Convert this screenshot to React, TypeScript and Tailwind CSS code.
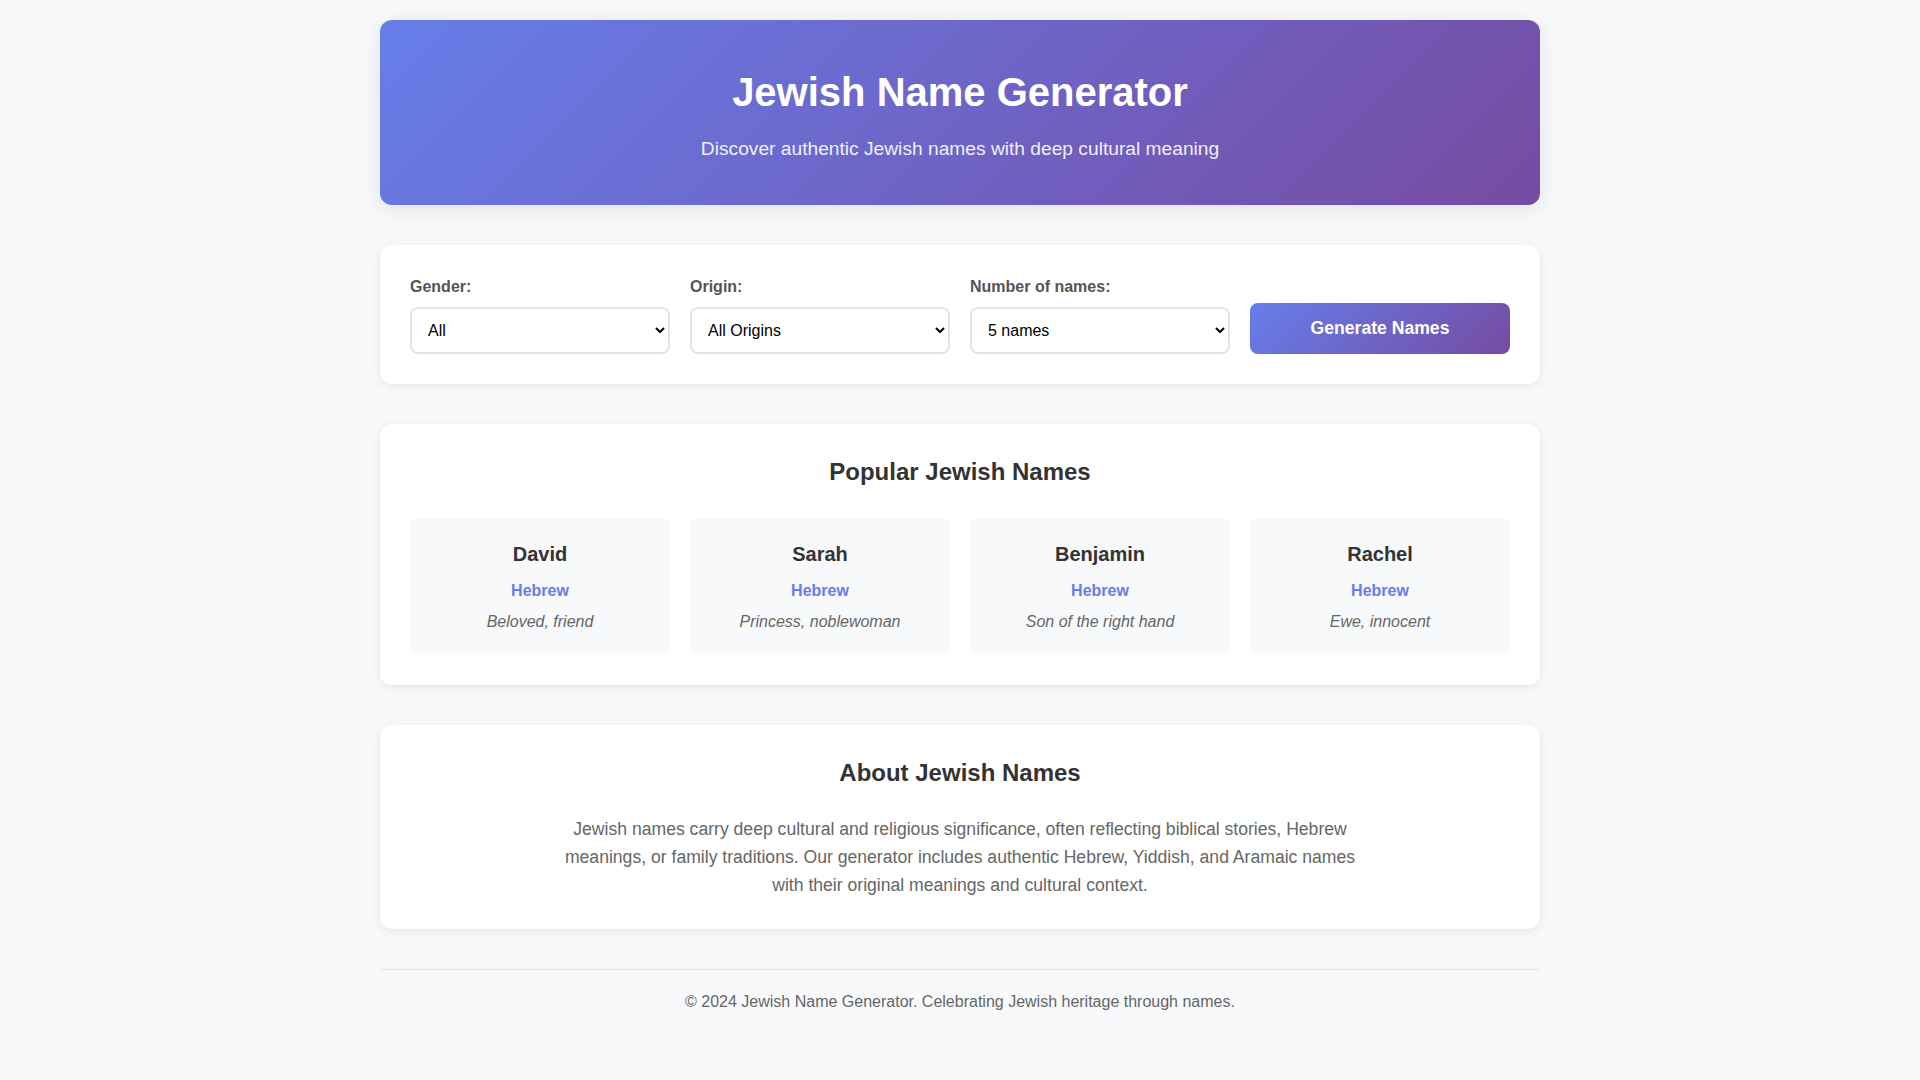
import React from 'react';

const popular = [
  { name: 'David', origin: 'Hebrew', meaning: 'Beloved, friend' },
  { name: 'Sarah', origin: 'Hebrew', meaning: 'Princess, noblewoman' },
  { name: 'Benjamin', origin: 'Hebrew', meaning: 'Son of the right hand' },
  { name: 'Rachel', origin: 'Hebrew', meaning: 'Ewe, innocent' },
];

const selectClass =
  'w-full h-[47px] p-[12px] border-2 border-[#e1e5e9] rounded-[8px] bg-white text-[16px] text-black';

const labelClass = 'block mb-[8px] text-[16px] leading-[24px] font-bold text-[#555]';

const App: React.FC = () => {
  return (
    <div className="min-h-screen bg-[#f8f9fa] font-['Liberation_Sans',Arial,sans-serif] text-[#333]">
      <div className="max-w-[1200px] mx-auto px-[20px] pt-[20px]">
        {/* Header */}
        <header className="mb-[40px] rounded-[12px] bg-[linear-gradient(135deg,#667eea_0%,#764ba2_100%)] pt-[42px] pb-[42px] text-center text-white shadow-[0_4px_20px_rgba(0,0,0,0.1)]">
          <h1 className="text-[40px] leading-[60px] font-bold mb-[12px]">Jewish Name Generator</h1>
          <p className="text-[19.2px] leading-[29px] opacity-90">
            Discover authentic Jewish names with deep cultural meaning
          </p>
        </header>

        {/* Controls */}
        <section className="mb-[40px] rounded-[12px] bg-white p-[30px] shadow-[0_2px_10px_rgba(0,0,0,0.08)]">
          <div className="grid grid-cols-4 gap-[20px] items-end">
            <div>
              <label className={labelClass}>Gender:</label>
              <select className={selectClass} defaultValue="all">
                <option value="all">All</option>
                <option value="male">Male</option>
                <option value="female">Female</option>
              </select>
            </div>
            <div>
              <label className={labelClass}>Origin:</label>
              <select className={selectClass} defaultValue="all">
                <option value="all">All Origins</option>
                <option value="hebrew">Hebrew</option>
                <option value="yiddish">Yiddish</option>
                <option value="aramaic">Aramaic</option>
              </select>
            </div>
            <div>
              <label className={labelClass}>Number of names:</label>
              <select className={selectClass} defaultValue="5">
                <option value="5">5 names</option>
                <option value="10">10 names</option>
                <option value="20">20 names</option>
              </select>
            </div>
            <button className="h-[51px] w-full rounded-[8px] bg-[linear-gradient(135deg,#667eea_0%,#764ba2_100%)] text-[17.6px] font-bold text-white">
              Generate Names
            </button>
          </div>
        </section>

        {/* Popular names */}
        <section className="mb-[40px] rounded-[12px] bg-white p-[30px] shadow-[0_2px_10px_rgba(0,0,0,0.08)]">
          <h2 className="text-center text-[24px] leading-[36px] font-bold text-[#333] mb-[28px]">Popular Jewish Names</h2>
          <div className="grid grid-cols-4 gap-[20px]">
            {popular.map((p) => (
              <div key={p.name} className="rounded-[8px] bg-[#f8f9fa] pt-[21px] pb-[21px] px-[20px] text-center">
                <h3 className="text-[20px] leading-[30px] font-bold text-[#333] mb-[10px]">{p.name}</h3>
                <div className="text-[16px] leading-[24px] font-bold text-[#667eea] mb-[7px]">{p.origin}</div>
                <div className="text-[16px] leading-[24px] italic text-[#666]">{p.meaning}</div>
              </div>
            ))}
          </div>
        </section>

        {/* About */}
        <section className="mb-[40px] rounded-[12px] bg-white p-[30px] shadow-[0_2px_10px_rgba(0,0,0,0.08)]">
          <h2 className="text-center text-[24px] leading-[36px] font-bold text-[#333] mb-[24px]">About Jewish Names</h2>
          <p className="max-w-[800px] mx-auto text-center text-[17.6px] leading-[28px] text-[#666]">
            Jewish names carry deep cultural and religious significance, often reflecting biblical stories, Hebrew
            meanings, or family traditions. Our generator includes authentic Hebrew, Yiddish, and Aramaic names
            with their original meanings and cultural context.
          </p>
        </section>

        {/* Footer */}
        <footer className="border-t border-[#e1e5e9] py-[20px] text-center text-[16px] leading-[24px] text-[#666]">
          © 2024 Jewish Name Generator. Celebrating Jewish heritage through names.
        </footer>
      </div>
    </div>
  );
};

export default App;
